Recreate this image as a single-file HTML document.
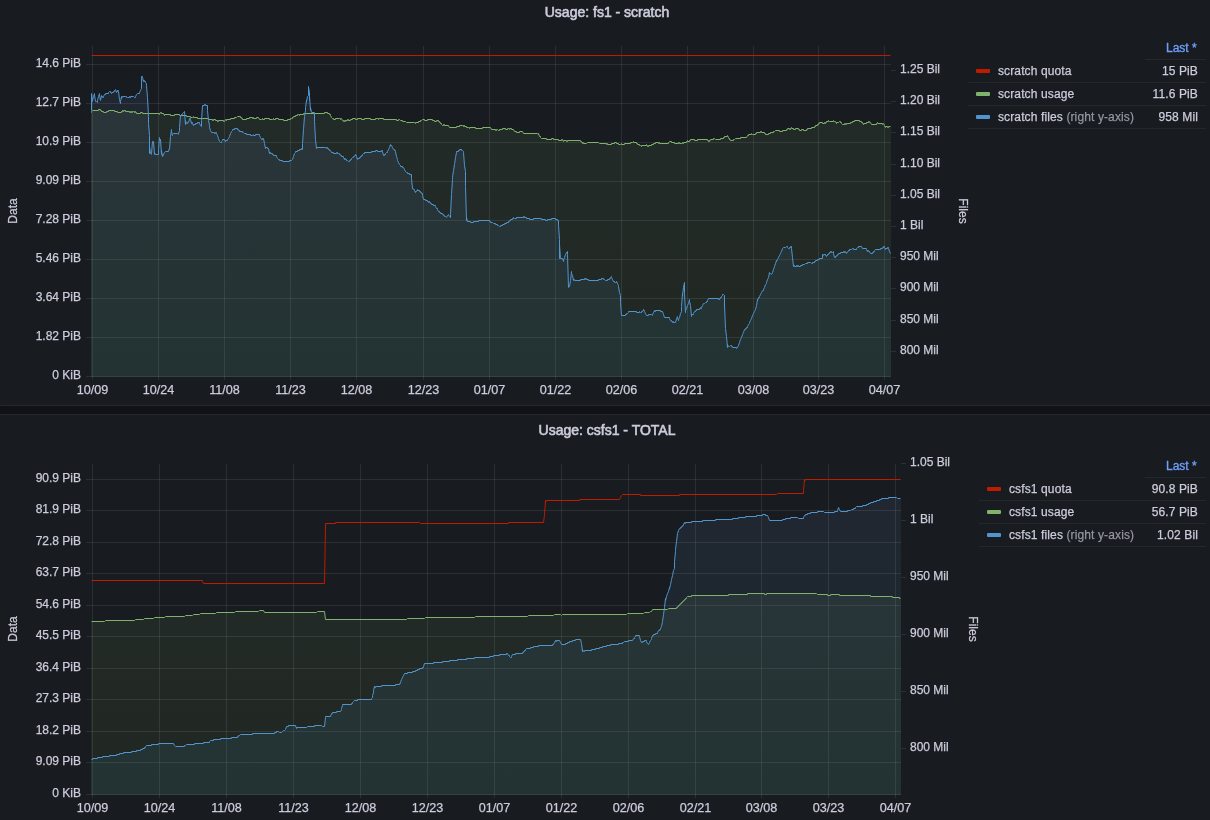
<!DOCTYPE html>
<html><head><meta charset="utf-8"><style>
html,body{margin:0;padding:0;width:1210px;height:820px;overflow:hidden;background:#111217;font-family:"Liberation Sans",sans-serif;}
.panel{position:absolute;left:-1px;width:1230px;background:#181b1f;border:1px solid #25272c;border-radius:2px;box-sizing:border-box}
svg{position:absolute;left:0;top:0;will-change:transform}
.ax{font-family:"Liberation Sans",sans-serif;font-size:12px;fill:#ccccdc;stroke:#ccccdc;stroke-width:0.25px}
.title{position:absolute;left:1.5px;width:1210px;text-align:center;font-size:14px;font-weight:normal;-webkit-text-stroke:0.6px #ccccdc;will-change:transform;color:#ccccdc;line-height:16px}
.lhead{will-change:transform;position:absolute;right:13px;font-size:12px;color:#6e9fff;line-height:14px;-webkit-text-stroke:0.35px #6e9fff}
.hline{position:absolute;left:1145px;width:61px;height:1px;background:#25272c}
.lrow{will-change:transform;position:absolute;height:22px;border-bottom:1px solid #25272c;font-size:12px;color:#ccccdc;line-height:22px;letter-spacing:0.12px;-webkit-text-stroke:0.25px #ccccdc}
.sw{position:absolute;top:9px;width:14px;height:4px;border-radius:1px}
.ln{position:absolute;top:0;white-space:nowrap}
.lv{position:absolute;right:8px;top:0}
.sec{color:rgba(204,204,220,0.65);-webkit-text-stroke:0.25px rgba(204,204,220,0.5)}
</style></head><body>
<div class="panel" style="top:-10px;height:416px"></div>
<div class="panel" style="top:414px;height:430px"></div>
<div class="title" style="top:4px">Usage: fs1 - scratch</div>
<div class="title" style="top:422px">Usage: csfs1 - TOTAL</div>
<svg width="1210" height="820" viewBox="0 0 1210 820">
<defs><linearGradient id="tpg" gradientUnits="userSpaceOnUse" x1="0" y1="46" x2="0" y2="377"><stop offset="0" stop-color="rgb(142,196,143)" stop-opacity="0.1"/><stop offset="1" stop-color="rgb(118,155,81)" stop-opacity="0.1"/></linearGradient><linearGradient id="tpb" gradientUnits="userSpaceOnUse" x1="0" y1="46" x2="0" y2="377"><stop offset="0" stop-color="rgb(121,149,217)" stop-opacity="0.1"/><stop offset="1" stop-color="rgb(52,157,184)" stop-opacity="0.1"/></linearGradient></defs>
<g shape-rendering="crispEdges">
<path d="M92 46h1v334h-1zM158 46h1v334h-1zM224 46h1v334h-1zM290 46h1v334h-1zM356 46h1v334h-1zM423 46h1v334h-1zM489 46h1v334h-1zM555 46h1v334h-1zM621 46h1v334h-1zM687 46h1v334h-1zM753 46h1v334h-1zM818 46h1v334h-1zM884 46h1v334h-1z" fill="rgba(240,250,255,0.09)"/>
<path d="M86 64H891v1H86zM86 103H891v1H86zM86 142H891v1H86zM86 181H891v1H86zM86 220H891v1H86zM86 259H891v1H86zM86 298H891v1H86zM86 337H891v1H86zM86 376H891v1H86zM891 70h5v1h-5zM891 101h5v1h-5zM891 132h5v1h-5zM891 164h5v1h-5zM891 195h5v1h-5zM891 226h5v1h-5zM891 257h5v1h-5zM891 288h5v1h-5zM891 320h5v1h-5zM891 351h5v1h-5z" fill="rgba(240,250,255,0.09)"/>
<path d="M91 377V112H92V111H93V111H94V111H95V111H96V111H97V111H98V110H99V110H100V111H101V112H102V112H103V113H104V113H105V113H106V112H107V112H108V111H109V111H110V111H111V111H112V111H113V111H114V112H115V112H116V112H117V113H118V113H119V113H120V113H121V112H122V111H123V111H124V111H125V112H126V112H127V112H128V112H129V113H130V112H131V113H132V112H133V112H134V112H135V113H136V114H137V114H138V114H139V114H140V113H141V113H142V114H143V114H144V114H145V114H146V114H147V114H148V114H149V114H150V114H151V114H152V114H153V114H154V114H155V114H156V114H157V114H158V114H159V115H160V113H161V114H162V114H163V114H164V115H165V115H166V115H167V115H168V115H169V115H170V116H171V116H172V116H173V116H174V115H175V115H176V115H177V115H178V115H179V116H180V116H181V116H182V116H183V116H184V116H185V116H186V117H187V117H188V117H189V117H190V118H191V118H192V118H193V118H194V118H195V118H196V118H197V119H198V119H199V119H200V119H201V119H202V119H203V119H204V119H205V119H206V119H207V119H208V120H209V120H210V120H211V120H212V121H213V120H214V120H215V121H216V121H217V122H218V121H219V121H220V121H221V121H222V121H223V122H224V122H225V120H226V120H227V120H228V120H229V120H230V119H231V119H232V119H233V119H234V118H235V118H236V118H237V117H238V117H239V117H240V118H241V119H242V120H243V120H244V120H245V120H246V119H247V119H248V119H249V118H250V118H251V118H252V119H253V119H254V119H255V119H256V118H257V118H258V118H259V120H260V120H261V120H262V120H263V120H264V119H265V119H266V119H267V119H268V119H269V120H270V120H271V120H272V120H273V120H274V120H275V119H276V119H277V119H278V120H279V120H280V120H281V120H282V120H283V121H284V121H285V121H286V121H287V120H288V120H289V120H290V119H291V119H292V119H293V117H294V117H295V116H296V116H297V115H298V115H299V115H300V115H301V115H302V115H303V114H304V114H305V114H306V114H307V114H308V114H309V114H310V114H311V114H312V114H313V114H314V114H315V114H316V114H317V114H318V114H319V114H320V114H321V114H322V114H323V114H324V113H325V113H326V113H327V114H328V114H329V115H330V116H331V118H332V119H333V120H334V120H335V119H336V119H337V119H338V119H339V119H340V119H341V119H342V121H343V122H344V122H345V121H346V121H347V120H348V121H349V121H350V120H351V120H352V119H353V119H354V119H355V120H356V120H357V119H358V119H359V119H360V119H361V120H362V120H363V120H364V119H365V119H366V119H367V119H368V119H369V119H370V120H371V120H372V120H373V120H374V120H375V119H376V119H377V119H378V119H379V119H380V119H381V119H382V119H383V120H384V120H385V120H386V120H387V120H388V120H389V120H390V120H391V120H392V120H393V120H394V120H395V120H396V121H397V121H398V120H399V120H400V121H401V121H402V122H403V122H404V122H405V122H406V123H407V123H408V123H409V123H410V123H411V123H412V123H413V123H414V123H415V123H416V123H417V123H418V122H419V122H420V121H421V121H422V120H423V120H424V121H425V121H426V121H427V120H428V120H429V120H430V120H431V120H432V121H433V121H434V122H435V122H436V121H437V121H438V122H439V123H440V124H441V125H442V126H443V125H444V126H445V126H446V126H447V126H448V126H449V128H450V128H451V128H452V128H453V128H454V128H455V128H456V127H457V127H458V127H459V126H460V126H461V126H462V126H463V126H464V127H465V127H466V128H467V128H468V128H469V128H470V128H471V128H472V128H473V128H474V128H475V129H476V129H477V129H478V129H479V129H480V129H481V129H482V128H483V128H484V128H485V128H486V128H487V128H488V128H489V128H490V128H491V130H492V130H493V130H494V130H495V131H496V130H497V130H498V131H499V130H500V130H501V130H502V129H503V129H504V129H505V130H506V130H507V129H508V129H509V129H510V129H511V130H512V130H513V130H514V132H515V132H516V133H517V133H518V133H519V132H520V132H521V132H522V132H523V134H524V134H525V134H526V134H527V134H528V134H529V134H530V134H531V134H532V134H533V134H534V134H535V134H536V134H537V134H538V134H539V137H540V138H541V139H542V139H543V139H544V139H545V139H546V140H547V140H548V140H549V140H550V140H551V139H552V139H553V140H554V140H555V140H556V140H557V140H558V141H559V141H560V141H561V140H562V141H563V141H564V141H565V141H566V142H567V141H568V141H569V141H570V141H571V141H572V141H573V141H574V141H575V141H576V141H577V141H578V141H579V141H580V142H581V142H582V143H583V144H584V144H585V144H586V144H587V143H588V143H589V143H590V143H591V143H592V143H593V143H594V143H595V143H596V143H597V143H598V143H599V144H600V144H601V144H602V144H603V144H604V144H605V144H606V145H607V145H608V145H609V145H610V145H611V144H612V144H613V144H614V143H615V143H616V144H617V144H618V145H619V145H620V145H621V145H622V145H623V145H624V144H625V144H626V144H627V144H628V144H629V144H630V143H631V143H632V143H633V143H634V143H635V143H636V144H637V145H638V145H639V146H640V146H641V146H642V146H643V146H644V146H645V146H646V145H647V147H648V146H649V146H650V146H651V145H652V145H653V144H654V144H655V143H656V143H657V143H658V144H659V144H660V144H661V144H662V144H663V144H664V144H665V144H666V144H667V144H668V143H669V142H670V142H671V143H672V143H673V143H674V144H675V144H676V144H677V144H678V143H679V144H680V144H681V144H682V144H683V143H684V143H685V143H686V142H687V142H688V142H689V141H690V140H691V140H692V140H693V140H694V141H695V141H696V141H697V140H698V140H699V140H700V140H701V140H702V140H703V140H704V140H705V140H706V140H707V141H708V142H709V142H710V140H711V140H712V140H713V139H714V139H715V140H716V140H717V140H718V140H719V140H720V139H721V139H722V139H723V138H724V137H725V137H726V137H727V136H728V138H729V139H730V141H731V141H732V141H733V140H734V140H735V139H736V139H737V139H738V139H739V139H740V138H741V138H742V138H743V138H744V138H745V138H746V138H747V136H748V135H749V135H750V135H751V134H752V135H753V135H754V135H755V134H756V133H757V133H758V133H759V133H760V132H761V133H762V133H763V133H764V134H765V135H766V135H767V135H768V134H769V134H770V133H771V133H772V133H773V132H774V132H775V131H776V131H777V131H778V131H779V132H780V132H781V132H782V131H783V131H784V131H785V131H786V130H787V129H788V129H789V130H790V129H791V129H792V129H793V130H794V130H795V129H796V129H797V129H798V130H799V131H800V131H801V130H802V130H803V131H804V131H805V131H806V130H807V129H808V129H809V129H810V129H811V128H812V128H813V128H814V127H815V126H816V126H817V125H818V124H819V123H820V123H821V123H822V124H823V124H824V123H825V123H826V122H827V122H828V121H829V122H830V122H831V122H832V122H833V121H834V122H835V122H836V123H837V123H838V123H839V122H840V123H841V124H842V125H843V125H844V124H845V125H846V124H847V124H848V124H849V124H850V123H851V123H852V122H853V122H854V121H855V121H856V121H857V121H858V121H859V122H860V122H861V123H862V124H863V124H864V124H865V124H866V123H867V123H868V122H869V123H870V123H871V125H872V125H873V125H874V125H875V125H876V124H877V124H878V124H879V124H880V124H881V124H882V125H883V124H884V126H885V127H886V127H887V128H888V127H889V127H890V127H891V377Z" fill="url(#tpg)"/>
<path d="M91 377V94H92V101H93V97H94V95H95V102H96V102H97V101H98V97H99V95H100V101H101V97H102V98H103V97H104V95H105V94H106V94H107V94H108V93H109V92H110V93H111V93H112V93H113V92H114V91H115V90H116V92H117V91H118V92H119V100H120V102H121V99H122V97H123V97H124V97H125V97H126V97H127V98H128V98H129V97H130V97H131V97H132V97H133V97H134V98H135V97H136V95H137V94H138V94H139V93H140V91H141V77H142V78H143V81H144V82H145V83H146V86H147V98H148V124H149V147H150V154H151V154H152V142H153V142H154V153H155V155H156V155H157V155H158V150H159V139H160V140H161V151H162V156H163V155H164V153H165V152H166V152H167V152H168V151H169V150H170V137H171V132H172V135H173V134H174V134H175V134H176V134H177V134H178V134H179V128H180V117H181V115H182V114H183V113H184V112H185V121H186V124H187V123H188V123H189V119H190V120H191V123H192V124H193V125H194V125H195V124H196V124H197V123H198V123H199V124H200V126H201V121H202V106H203V106H204V105H205V106H206V106H207V111H208V121H209V128H210V131H211V133H212V133H213V133H214V133H215V134H216V134H217V136H218V139H219V142H220V143H221V142H222V140H223V140H224V141H225V141H226V141H227V140H228V139H229V137H230V134H231V132H232V130H233V130H234V129H235V129H236V129H237V130H238V131H239V132H240V132H241V132H242V133H243V133H244V134H245V134H246V135H247V135H248V135H249V135H250V136H251V136H252V136H253V136H254V136H255V135H256V135H257V135H258V135H259V136H260V138H261V140H262V139H263V139H264V144H265V148H266V148H267V149H268V149H269V153H270V154H271V154H272V155H273V156H274V156H275V156H276V157H277V159H278V160H279V161H280V161H281V161H282V162H283V162H284V162H285V162H286V162H287V162H288V162H289V161H290V161H291V161H292V160H293V157H294V154H295V152H296V152H297V151H298V151H299V150H300V150H301V149H302V144H303V130H304V117H305V108H306V102H307V97H308V88H309V97H310V108H311V113H312V113H313V113H314V122H315V140H316V148H317V148H318V148H319V148H320V148H321V148H322V148H323V148H324V148H325V148H326V148H327V149H328V150H329V151H330V151H331V153H332V153H333V154H334V154H335V154H336V153H337V154H338V154H339V154H340V156H341V157H342V157H343V158H344V159H345V160H346V161H347V161H348V162H349V161H350V160H351V159H352V158H353V157H354V157H355V156H356V157H357V159H358V159H359V158H360V157H361V156H362V155H363V154H364V153H365V153H366V153H367V153H368V153H369V153H370V153H371V152H372V152H373V152H374V152H375V151H376V151H377V152H378V152H379V152H380V152H381V151H382V152H383V156H384V155H385V154H386V153H387V152H388V150H389V148H390V146H391V146H392V148H393V150H394V151H395V152H396V157H397V161H398V163H399V165H400V167H401V167H402V168H403V168H404V170H405V172H406V173H407V174H408V174H409V175H410V175H411V179H412V188H413V190H414V191H415V192H416V192H417V191H418V191H419V192H420V193H421V194H422V196H423V200H424V200H425V201H426V201H427V202H428V202H429V203H430V204H431V205H432V205H433V206H434V206H435V207H436V209H437V210H438V212H439V213H440V214H441V214H442V215H443V216H444V217H445V217H446V218H447V216H448V215H449V217H450V215H451V195H452V178H453V171H454V165H455V158H456V152H457V152H458V151H459V150H460V150H461V151H462V151H463V153H464V166H465V187H466V218H467V222H468V222H469V222H470V223H471V223H472V223H473V222H474V222H475V222H476V222H477V222H478V221H479V221H480V221H481V221H482V221H483V221H484V221H485V221H486V221H487V221H488V221H489V222H490V223H491V223H492V223H493V224H494V224H495V225H496V225H497V226H498V226H499V227H500V226H501V226H502V225H503V225H504V224H505V224H506V223H507V223H508V222H509V221H510V220H511V220H512V219H513V218H514V219H515V219H516V218H517V218H518V218H519V218H520V218H521V218H522V218H523V217H524V218H525V218H526V219H527V219H528V219H529V220H530V220H531V220H532V220H533V219H534V219H535V219H536V219H537V219H538V219H539V219H540V219H541V220H542V220H543V220H544V220H545V221H546V221H547V220H548V220H549V220H550V220H551V219H552V219H553V219H554V219H555V220H556V220H557V221H558V226H559V245H560V259H561V259H562V259H563V261H564V258H565V255H566V253H567V255H568V288H569V287H570V281H571V274H572V276H573V280H574V281H575V281H576V281H577V281H578V281H579V281H580V280H581V280H582V280H583V280H584V279H585V279H586V280H587V280H588V281H589V281H590V281H591V281H592V281H593V281H594V281H595V281H596V281H597V281H598V280H599V280H600V280H601V279H602V279H603V280H604V280H605V281H606V281H607V280H608V280H609V279H610V278H611V278H612V280H613V282H614V283H615V283H616V283H617V284H618V287H619V293H620V303H621V316H622V316H623V316H624V316H625V315H626V314H627V314H628V312H629V312H630V312H631V312H632V312H633V312H634V312H635V312H636V313H637V313H638V313H639V312H640V313H641V312H642V312H643V311H644V312H645V314H646V316H647V316H648V315H649V315H650V315H651V315H652V315H653V313H654V312H655V311H656V311H657V311H658V311H659V311H660V312H661V312H662V312H663V315H664V318H665V318H666V318H667V318H668V318H669V319H670V321H671V322H672V322H673V323H674V323H675V323H676V319H677V318H678V320H679V318H680V314H681V307H682V296H683V288H684V294H685V311H686V309H687V306H688V304H689V302H690V306H691V315H692V315H693V314H694V312H695V311H696V310H697V310H698V310H699V309H700V309H701V308H702V306H703V304H704V304H705V303H706V302H707V301H708V299H709V299H710V299H711V299H712V299H713V299H714V299H715V299H716V299H717V299H718V300H719V299H720V298H721V297H722V295H723V295H724V305H725V329H726V337H727V345H728V347H729V347H730V346H731V347H732V348H733V348H734V348H735V348H736V349H737V348H738V346H739V343H740V340H741V338H742V335H743V333H744V330H745V329H746V328H747V327H748V325H749V323H750V321H751V319H752V316H753V314H754V312H755V310H756V306H757V301H758V298H759V297H760V295H761V293H762V291H763V290H764V288H765V285H766V283H767V280H768V278H769V274H770V274H771V275H772V273H773V270H774V267H775V264H776V262H777V260H778V258H779V256H780V254H781V252H782V249H783V248H784V248H785V248H786V247H787V248H788V249H789V248H790V247H791V249H792V258H793V266H794V267H795V267H796V266H797V267H798V267H799V267H800V266H801V266H802V265H803V265H804V265H805V264H806V264H807V263H808V263H809V263H810V263H811V264H812V263H813V263H814V262H815V261H816V261H817V260H818V260H819V259H820V259H821V259H822V257H823V255H824V255H825V256H826V256H827V255H828V254H829V253H830V252H831V253H832V253H833V254H834V258H835V257H836V256H837V255H838V254H839V254H840V253H841V253H842V253H843V252H844V252H845V253H846V253H847V253H848V251H849V250H850V250H851V250H852V249H853V250H854V250H855V250H856V249H857V248H858V247H859V247H860V247H861V247H862V249H863V249H864V249H865V249H866V250H867V251H868V252H869V252H870V254H871V254H872V253H873V252H874V251H875V250H876V250H877V250H878V250H879V250H880V249H881V249H882V248H883V247H884V248H885V249H886V249H887V248H888V249H889V252H890V254H891V377Z" fill="url(#tpb)"/>
</g>
<path d="M91.5,55.5 L890.5,55.5" fill="none" stroke="#bf1b00" stroke-width="1" stroke-linejoin="round"/>
<path d="M91.5,112.5 L91.5,111.5 L92.5,110.5 L98.5,110.5 L98.5,109.5 L100.5,109.5 L100.5,110.5 L101.5,110.5 L101.5,111.5 L103.5,111.5 L103.5,112.5 L106.5,112.5 L106.5,111.5 L108.5,111.5 L108.5,110.5 L114.5,110.5 L114.5,111.5 L117.5,111.5 L117.5,112.5 L121.5,112.5 L121.5,111.5 L122.5,111.5 L122.5,110.5 L123.5,111.5 L123.5,110.5 L125.5,110.5 L125.5,111.5 L129.5,111.5 L129.5,112.5 L130.5,112.5 L130.5,111.5 L131.5,111.5 L131.5,112.5 L132.5,112.5 L132.5,111.5 L133.5,111.5 L134.5,112.5 L134.5,111.5 L135.5,111.5 L135.5,112.5 L136.5,112.5 L136.5,113.5 L140.5,113.5 L140.5,112.5 L142.5,112.5 L142.5,113.5 L159.5,113.5 L159.5,114.5 L160.5,112.5 L161.5,112.5 L161.5,113.5 L163.5,113.5 L164.5,115.5 L164.5,114.5 L170.5,114.5 L170.5,115.5 L174.5,115.5 L174.5,114.5 L179.5,114.5 L179.5,115.5 L186.5,115.5 L186.5,116.5 L190.5,116.5 L190.5,117.5 L192.5,117.5 L193.5,116.5 L193.5,117.5 L197.5,117.5 L197.5,118.5 L208.5,118.5 L208.5,119.5 L212.5,119.5 L212.5,120.5 L213.5,120.5 L213.5,119.5 L215.5,119.5 L215.5,120.5 L217.5,120.5 L217.5,121.5 L218.5,121.5 L218.5,120.5 L223.5,120.5 L223.5,121.5 L224.5,121.5 L225.5,119.5 L226.5,120.5 L226.5,119.5 L230.5,119.5 L230.5,118.5 L234.5,118.5 L234.5,117.5 L236.5,117.5 L237.5,116.5 L240.5,116.5 L240.5,117.5 L241.5,117.5 L241.5,118.5 L242.5,118.5 L242.5,119.5 L246.5,119.5 L246.5,118.5 L249.5,118.5 L249.5,117.5 L252.5,117.5 L252.5,118.5 L253.5,117.5 L253.5,118.5 L256.5,118.5 L256.5,117.5 L258.5,117.5 L259.5,119.5 L261.5,119.5 L262.5,118.5 L262.5,119.5 L264.5,119.5 L264.5,118.5 L269.5,118.5 L269.5,119.5 L272.5,119.5 L273.5,118.5 L273.5,119.5 L275.5,119.5 L275.5,118.5 L278.5,118.5 L278.5,119.5 L283.5,119.5 L283.5,120.5 L287.5,120.5 L287.5,119.5 L290.5,119.5 L290.5,118.5 L291.5,118.5 L292.5,117.5 L292.5,118.5 L293.5,116.5 L295.5,116.5 L295.5,115.5 L297.5,115.5 L297.5,114.5 L298.5,114.5 L299.5,115.5 L299.5,114.5 L303.5,114.5 L303.5,113.5 L324.5,113.5 L324.5,112.5 L327.5,112.5 L327.5,113.5 L329.5,113.5 L329.5,114.5 L330.5,114.5 L330.5,115.5 L331.5,117.5 L332.5,118.5 L333.5,118.5 L333.5,119.5 L335.5,119.5 L335.5,118.5 L339.5,118.5 L340.5,119.5 L340.5,118.5 L341.5,118.5 L342.5,120.5 L343.5,120.5 L343.5,121.5 L344.5,120.5 L344.5,121.5 L345.5,121.5 L345.5,120.5 L347.5,120.5 L347.5,119.5 L348.5,119.5 L348.5,120.5 L350.5,120.5 L350.5,119.5 L352.5,119.5 L352.5,118.5 L355.5,118.5 L355.5,119.5 L357.5,119.5 L357.5,118.5 L361.5,118.5 L361.5,119.5 L364.5,119.5 L364.5,118.5 L370.5,118.5 L370.5,119.5 L375.5,119.5 L375.5,118.5 L377.5,118.5 L378.5,119.5 L378.5,118.5 L383.5,118.5 L383.5,119.5 L396.5,119.5 L396.5,120.5 L398.5,120.5 L398.5,119.5 L399.5,119.5 L400.5,120.5 L402.5,120.5 L402.5,121.5 L405.5,121.5 L406.5,122.5 L414.5,122.5 L415.5,123.5 L415.5,122.5 L418.5,122.5 L418.5,121.5 L420.5,121.5 L420.5,120.5 L421.5,120.5 L422.5,119.5 L424.5,119.5 L424.5,120.5 L427.5,120.5 L427.5,119.5 L432.5,119.5 L432.5,120.5 L434.5,120.5 L434.5,121.5 L436.5,121.5 L436.5,120.5 L438.5,120.5 L438.5,121.5 L439.5,121.5 L439.5,122.5 L440.5,122.5 L440.5,123.5 L441.5,123.5 L441.5,124.5 L442.5,125.5 L443.5,125.5 L443.5,124.5 L444.5,124.5 L444.5,125.5 L448.5,125.5 L449.5,127.5 L456.5,127.5 L456.5,126.5 L459.5,126.5 L459.5,125.5 L462.5,125.5 L463.5,126.5 L463.5,125.5 L464.5,125.5 L464.5,126.5 L466.5,126.5 L466.5,127.5 L468.5,127.5 L469.5,128.5 L469.5,127.5 L475.5,127.5 L475.5,128.5 L482.5,128.5 L482.5,127.5 L490.5,127.5 L491.5,129.5 L495.5,129.5 L495.5,130.5 L496.5,130.5 L496.5,129.5 L497.5,129.5 L498.5,130.5 L499.5,130.5 L499.5,129.5 L502.5,129.5 L502.5,128.5 L505.5,128.5 L505.5,129.5 L507.5,129.5 L507.5,128.5 L508.5,128.5 L509.5,129.5 L509.5,128.5 L511.5,128.5 L511.5,129.5 L513.5,129.5 L514.5,131.5 L516.5,131.5 L516.5,132.5 L519.5,132.5 L519.5,131.5 L522.5,131.5 L523.5,133.5 L537.5,133.5 L538.5,134.5 L538.5,133.5 L539.5,136.5 L540.5,136.5 L540.5,137.5 L541.5,138.5 L546.5,138.5 L546.5,139.5 L551.5,139.5 L551.5,138.5 L553.5,138.5 L553.5,139.5 L558.5,139.5 L558.5,140.5 L561.5,140.5 L561.5,139.5 L562.5,139.5 L562.5,140.5 L563.5,141.5 L563.5,140.5 L566.5,140.5 L566.5,141.5 L567.5,141.5 L567.5,140.5 L580.5,140.5 L580.5,141.5 L581.5,141.5 L582.5,143.5 L582.5,142.5 L583.5,142.5 L583.5,143.5 L586.5,143.5 L587.5,142.5 L598.5,142.5 L599.5,143.5 L606.5,143.5 L606.5,144.5 L607.5,143.5 L607.5,144.5 L611.5,144.5 L611.5,143.5 L614.5,143.5 L614.5,142.5 L616.5,142.5 L616.5,143.5 L618.5,143.5 L618.5,144.5 L620.5,144.5 L621.5,143.5 L621.5,144.5 L624.5,144.5 L624.5,143.5 L630.5,143.5 L630.5,142.5 L632.5,142.5 L633.5,141.5 L633.5,142.5 L636.5,142.5 L636.5,143.5 L637.5,143.5 L637.5,144.5 L639.5,144.5 L639.5,145.5 L640.5,145.5 L641.5,146.5 L641.5,145.5 L646.5,145.5 L646.5,144.5 L647.5,145.5 L647.5,146.5 L648.5,146.5 L648.5,145.5 L651.5,145.5 L651.5,144.5 L653.5,144.5 L653.5,143.5 L655.5,143.5 L655.5,142.5 L658.5,142.5 L658.5,143.5 L659.5,142.5 L659.5,143.5 L668.5,143.5 L668.5,142.5 L669.5,141.5 L671.5,141.5 L671.5,142.5 L674.5,142.5 L674.5,143.5 L678.5,143.5 L678.5,142.5 L679.5,142.5 L679.5,143.5 L681.5,143.5 L682.5,142.5 L682.5,143.5 L683.5,143.5 L683.5,142.5 L686.5,142.5 L686.5,141.5 L687.5,140.5 L687.5,141.5 L689.5,141.5 L689.5,140.5 L690.5,140.5 L690.5,139.5 L694.5,139.5 L694.5,140.5 L697.5,140.5 L697.5,139.5 L707.5,139.5 L707.5,140.5 L708.5,140.5 L708.5,141.5 L709.5,140.5 L709.5,141.5 L710.5,139.5 L713.5,139.5 L713.5,138.5 L714.5,138.5 L715.5,139.5 L720.5,139.5 L720.5,138.5 L723.5,138.5 L723.5,137.5 L724.5,137.5 L724.5,136.5 L727.5,136.5 L727.5,135.5 L728.5,137.5 L729.5,139.5 L729.5,138.5 L730.5,140.5 L733.5,140.5 L733.5,139.5 L734.5,139.5 L735.5,138.5 L740.5,138.5 L740.5,137.5 L746.5,137.5 L747.5,135.5 L748.5,135.5 L748.5,134.5 L751.5,134.5 L751.5,133.5 L752.5,134.5 L755.5,134.5 L755.5,133.5 L756.5,133.5 L756.5,132.5 L760.5,132.5 L760.5,131.5 L761.5,131.5 L761.5,132.5 L764.5,132.5 L764.5,133.5 L765.5,133.5 L765.5,134.5 L768.5,134.5 L768.5,133.5 L770.5,133.5 L770.5,132.5 L773.5,132.5 L773.5,131.5 L774.5,131.5 L775.5,130.5 L779.5,130.5 L779.5,131.5 L782.5,131.5 L782.5,130.5 L786.5,130.5 L786.5,129.5 L787.5,129.5 L787.5,128.5 L789.5,128.5 L789.5,129.5 L790.5,129.5 L790.5,128.5 L791.5,127.5 L791.5,128.5 L793.5,128.5 L793.5,129.5 L795.5,129.5 L795.5,128.5 L798.5,128.5 L798.5,129.5 L799.5,129.5 L799.5,130.5 L801.5,130.5 L801.5,129.5 L803.5,129.5 L803.5,130.5 L806.5,130.5 L806.5,129.5 L807.5,129.5 L807.5,128.5 L811.5,128.5 L811.5,127.5 L814.5,127.5 L814.5,126.5 L815.5,126.5 L815.5,125.5 L817.5,125.5 L817.5,124.5 L818.5,124.5 L818.5,123.5 L819.5,123.5 L819.5,122.5 L822.5,122.5 L822.5,123.5 L824.5,123.5 L824.5,122.5 L825.5,123.5 L825.5,122.5 L826.5,122.5 L826.5,121.5 L828.5,121.5 L828.5,120.5 L829.5,121.5 L833.5,121.5 L833.5,120.5 L834.5,121.5 L835.5,121.5 L836.5,123.5 L836.5,122.5 L838.5,122.5 L839.5,121.5 L840.5,121.5 L840.5,122.5 L841.5,122.5 L841.5,123.5 L842.5,124.5 L844.5,124.5 L844.5,123.5 L845.5,123.5 L845.5,124.5 L846.5,124.5 L846.5,123.5 L850.5,123.5 L850.5,122.5 L852.5,122.5 L852.5,121.5 L854.5,121.5 L854.5,120.5 L859.5,120.5 L859.5,121.5 L861.5,121.5 L861.5,122.5 L862.5,122.5 L862.5,123.5 L863.5,124.5 L863.5,123.5 L866.5,123.5 L866.5,122.5 L868.5,122.5 L868.5,121.5 L869.5,121.5 L869.5,122.5 L870.5,122.5 L871.5,124.5 L876.5,124.5 L876.5,123.5 L877.5,122.5 L877.5,123.5 L882.5,123.5 L882.5,124.5 L883.5,123.5 L884.5,125.5 L885.5,127.5 L885.5,126.5 L887.5,126.5 L887.5,127.5 L888.5,127.5 L888.5,126.5 L890.5,126.5" fill="none" stroke="#7eb26d" stroke-width="1" stroke-linejoin="round"/>
<path d="M91.5,110.5 L91.5,93.5 L92.5,101.5 L92.5,100.5 L93.5,96.5 L94.5,93.5 L94.5,94.5 L95.5,101.5 L96.5,101.5 L97.5,102.5 L97.5,100.5 L98.5,96.5 L99.5,93.5 L99.5,94.5 L100.5,100.5 L101.5,95.5 L101.5,96.5 L102.5,96.5 L102.5,97.5 L103.5,97.5 L103.5,96.5 L104.5,94.5 L105.5,94.5 L105.5,93.5 L108.5,93.5 L108.5,92.5 L109.5,91.5 L110.5,91.5 L110.5,92.5 L111.5,93.5 L111.5,92.5 L113.5,92.5 L113.5,91.5 L114.5,91.5 L114.5,90.5 L115.5,89.5 L116.5,92.5 L116.5,91.5 L117.5,91.5 L117.5,90.5 L118.5,90.5 L118.5,91.5 L119.5,99.5 L120.5,103.5 L120.5,101.5 L121.5,96.5 L121.5,98.5 L122.5,96.5 L125.5,96.5 L126.5,97.5 L126.5,96.5 L127.5,97.5 L129.5,97.5 L129.5,96.5 L130.5,97.5 L130.5,96.5 L133.5,96.5 L134.5,97.5 L135.5,97.5 L135.5,96.5 L136.5,94.5 L137.5,93.5 L139.5,93.5 L139.5,92.5 L140.5,90.5 L141.5,88.5 L141.5,78.5 L141.5,76.5 L142.5,76.5 L142.5,77.5 L143.5,81.5 L143.5,80.5 L144.5,80.5 L144.5,81.5 L145.5,81.5 L145.5,82.5 L146.5,83.5 L146.5,85.5 L147.5,97.5 L148.5,116.5 L148.5,123.5 L149.5,135.5 L149.5,153.5 L149.5,146.5 L150.5,153.5 L151.5,154.5 L151.5,153.5 L152.5,141.5 L153.5,141.5 L154.5,154.5 L154.5,152.5 L155.5,154.5 L158.5,154.5 L158.5,149.5 L159.5,137.5 L159.5,138.5 L160.5,140.5 L160.5,139.5 L161.5,154.5 L161.5,150.5 L162.5,156.5 L162.5,155.5 L163.5,155.5 L163.5,154.5 L164.5,152.5 L165.5,151.5 L168.5,151.5 L168.5,150.5 L169.5,148.5 L169.5,149.5 L170.5,136.5 L171.5,129.5 L171.5,131.5 L172.5,135.5 L172.5,134.5 L173.5,133.5 L177.5,133.5 L178.5,134.5 L178.5,133.5 L179.5,130.5 L179.5,127.5 L180.5,115.5 L180.5,116.5 L181.5,114.5 L182.5,114.5 L182.5,113.5 L183.5,112.5 L184.5,111.5 L185.5,124.5 L185.5,120.5 L186.5,123.5 L187.5,123.5 L187.5,122.5 L188.5,122.5 L189.5,118.5 L190.5,118.5 L190.5,119.5 L191.5,123.5 L191.5,122.5 L192.5,122.5 L192.5,123.5 L193.5,125.5 L193.5,124.5 L195.5,124.5 L195.5,123.5 L197.5,123.5 L197.5,122.5 L199.5,122.5 L199.5,123.5 L200.5,125.5 L201.5,126.5 L201.5,120.5 L202.5,105.5 L204.5,105.5 L204.5,104.5 L205.5,104.5 L205.5,105.5 L207.5,105.5 L207.5,110.5 L208.5,120.5 L209.5,125.5 L209.5,127.5 L210.5,130.5 L211.5,132.5 L213.5,132.5 L214.5,133.5 L214.5,132.5 L215.5,132.5 L215.5,133.5 L216.5,132.5 L216.5,133.5 L217.5,135.5 L218.5,138.5 L219.5,141.5 L220.5,142.5 L221.5,142.5 L221.5,141.5 L222.5,140.5 L222.5,139.5 L224.5,139.5 L224.5,140.5 L225.5,141.5 L225.5,140.5 L227.5,140.5 L227.5,139.5 L228.5,138.5 L229.5,136.5 L230.5,133.5 L231.5,131.5 L232.5,130.5 L232.5,129.5 L234.5,129.5 L234.5,128.5 L237.5,128.5 L237.5,129.5 L238.5,129.5 L238.5,130.5 L239.5,130.5 L239.5,131.5 L242.5,131.5 L242.5,132.5 L243.5,132.5 L244.5,133.5 L246.5,133.5 L246.5,134.5 L250.5,134.5 L250.5,135.5 L252.5,135.5 L253.5,134.5 L253.5,135.5 L255.5,135.5 L255.5,134.5 L259.5,134.5 L259.5,135.5 L260.5,137.5 L261.5,139.5 L262.5,139.5 L262.5,138.5 L263.5,138.5 L264.5,143.5 L265.5,148.5 L265.5,147.5 L267.5,147.5 L267.5,148.5 L268.5,148.5 L269.5,153.5 L269.5,152.5 L270.5,152.5 L270.5,153.5 L272.5,153.5 L272.5,154.5 L273.5,154.5 L273.5,155.5 L276.5,155.5 L276.5,156.5 L277.5,158.5 L278.5,159.5 L279.5,159.5 L279.5,160.5 L282.5,160.5 L282.5,161.5 L289.5,161.5 L289.5,160.5 L291.5,160.5 L292.5,159.5 L293.5,156.5 L294.5,153.5 L295.5,152.5 L295.5,151.5 L297.5,151.5 L297.5,150.5 L299.5,150.5 L299.5,149.5 L301.5,149.5 L301.5,148.5 L302.5,149.5 L302.5,143.5 L303.5,129.5 L304.5,116.5 L305.5,110.5 L305.5,107.5 L306.5,100.5 L306.5,101.5 L307.5,96.5 L308.5,95.5 L308.5,86.5 L308.5,87.5 L309.5,92.5 L309.5,100.5 L309.5,96.5 L310.5,110.5 L310.5,107.5 L311.5,112.5 L314.5,112.5 L314.5,121.5 L315.5,139.5 L316.5,148.5 L316.5,147.5 L325.5,147.5 L326.5,148.5 L326.5,147.5 L327.5,147.5 L327.5,148.5 L328.5,148.5 L328.5,149.5 L329.5,149.5 L329.5,150.5 L330.5,150.5 L331.5,152.5 L333.5,152.5 L333.5,153.5 L336.5,153.5 L336.5,152.5 L337.5,152.5 L337.5,153.5 L338.5,153.5 L339.5,154.5 L339.5,153.5 L340.5,155.5 L341.5,155.5 L341.5,156.5 L343.5,156.5 L343.5,157.5 L344.5,159.5 L344.5,158.5 L345.5,158.5 L345.5,159.5 L346.5,159.5 L346.5,160.5 L347.5,160.5 L348.5,161.5 L349.5,161.5 L349.5,160.5 L350.5,160.5 L350.5,159.5 L351.5,159.5 L351.5,158.5 L352.5,157.5 L353.5,157.5 L353.5,156.5 L354.5,156.5 L355.5,154.5 L355.5,155.5 L356.5,155.5 L356.5,156.5 L357.5,159.5 L357.5,158.5 L359.5,158.5 L359.5,157.5 L360.5,157.5 L360.5,156.5 L361.5,156.5 L361.5,155.5 L362.5,155.5 L362.5,154.5 L363.5,153.5 L364.5,153.5 L364.5,152.5 L371.5,152.5 L371.5,151.5 L375.5,151.5 L375.5,150.5 L377.5,150.5 L377.5,151.5 L381.5,151.5 L381.5,150.5 L382.5,150.5 L382.5,151.5 L383.5,155.5 L384.5,155.5 L384.5,154.5 L385.5,154.5 L385.5,153.5 L386.5,152.5 L387.5,152.5 L387.5,151.5 L388.5,149.5 L389.5,147.5 L390.5,144.5 L390.5,145.5 L391.5,145.5 L392.5,147.5 L393.5,149.5 L394.5,149.5 L394.5,150.5 L395.5,150.5 L395.5,151.5 L396.5,156.5 L397.5,159.5 L397.5,160.5 L398.5,162.5 L399.5,164.5 L400.5,165.5 L400.5,166.5 L402.5,166.5 L402.5,167.5 L403.5,167.5 L404.5,169.5 L405.5,171.5 L406.5,172.5 L407.5,172.5 L407.5,173.5 L409.5,173.5 L409.5,174.5 L411.5,174.5 L411.5,178.5 L412.5,188.5 L412.5,187.5 L413.5,189.5 L414.5,189.5 L414.5,190.5 L415.5,192.5 L415.5,191.5 L416.5,191.5 L417.5,189.5 L417.5,190.5 L419.5,190.5 L419.5,191.5 L420.5,191.5 L420.5,192.5 L421.5,192.5 L421.5,193.5 L422.5,193.5 L422.5,195.5 L423.5,199.5 L425.5,199.5 L425.5,200.5 L427.5,200.5 L427.5,201.5 L428.5,202.5 L428.5,201.5 L429.5,201.5 L429.5,202.5 L430.5,202.5 L430.5,203.5 L431.5,203.5 L431.5,204.5 L433.5,204.5 L433.5,205.5 L435.5,205.5 L435.5,206.5 L436.5,208.5 L437.5,208.5 L437.5,209.5 L438.5,211.5 L439.5,211.5 L439.5,212.5 L440.5,212.5 L440.5,213.5 L442.5,213.5 L442.5,214.5 L443.5,214.5 L443.5,215.5 L444.5,215.5 L444.5,216.5 L445.5,216.5 L446.5,217.5 L447.5,215.5 L448.5,214.5 L449.5,216.5 L450.5,217.5 L450.5,214.5 L451.5,194.5 L452.5,179.5 L452.5,177.5 L453.5,170.5 L454.5,164.5 L455.5,157.5 L456.5,152.5 L456.5,151.5 L458.5,151.5 L458.5,150.5 L459.5,150.5 L459.5,149.5 L461.5,149.5 L461.5,150.5 L462.5,150.5 L463.5,151.5 L463.5,152.5 L464.5,165.5 L465.5,171.5 L465.5,186.5 L466.5,220.5 L466.5,217.5 L467.5,221.5 L470.5,221.5 L470.5,222.5 L473.5,222.5 L473.5,221.5 L478.5,221.5 L478.5,220.5 L489.5,220.5 L489.5,221.5 L490.5,221.5 L490.5,222.5 L492.5,222.5 L493.5,223.5 L495.5,223.5 L495.5,224.5 L497.5,224.5 L497.5,225.5 L498.5,225.5 L499.5,226.5 L500.5,226.5 L500.5,225.5 L502.5,225.5 L502.5,224.5 L504.5,224.5 L504.5,223.5 L506.5,223.5 L506.5,222.5 L508.5,222.5 L508.5,221.5 L509.5,221.5 L509.5,220.5 L510.5,220.5 L510.5,219.5 L512.5,219.5 L512.5,218.5 L513.5,218.5 L513.5,217.5 L514.5,218.5 L516.5,218.5 L516.5,217.5 L523.5,217.5 L523.5,216.5 L524.5,216.5 L524.5,217.5 L526.5,217.5 L526.5,218.5 L529.5,218.5 L529.5,219.5 L533.5,219.5 L533.5,218.5 L541.5,218.5 L541.5,219.5 L545.5,219.5 L545.5,220.5 L547.5,220.5 L547.5,219.5 L551.5,219.5 L551.5,218.5 L555.5,218.5 L555.5,219.5 L557.5,219.5 L557.5,220.5 L558.5,220.5 L558.5,225.5 L559.5,239.5 L559.5,258.5 L559.5,244.5 L560.5,258.5 L562.5,258.5 L563.5,261.5 L563.5,260.5 L564.5,257.5 L565.5,254.5 L566.5,252.5 L567.5,251.5 L567.5,254.5 L568.5,287.5 L569.5,286.5 L570.5,280.5 L571.5,271.5 L571.5,273.5 L572.5,275.5 L573.5,280.5 L573.5,279.5 L574.5,279.5 L574.5,280.5 L580.5,280.5 L580.5,279.5 L584.5,279.5 L584.5,278.5 L585.5,279.5 L585.5,278.5 L586.5,278.5 L586.5,279.5 L588.5,279.5 L588.5,280.5 L598.5,280.5 L598.5,279.5 L601.5,279.5 L601.5,278.5 L603.5,278.5 L603.5,279.5 L604.5,279.5 L605.5,280.5 L607.5,280.5 L607.5,279.5 L609.5,279.5 L609.5,278.5 L610.5,278.5 L610.5,277.5 L611.5,276.5 L611.5,277.5 L612.5,279.5 L613.5,281.5 L614.5,281.5 L614.5,282.5 L615.5,282.5 L616.5,281.5 L616.5,282.5 L617.5,282.5 L617.5,283.5 L618.5,285.5 L618.5,286.5 L619.5,292.5 L620.5,295.5 L620.5,302.5 L621.5,315.5 L625.5,315.5 L625.5,314.5 L626.5,314.5 L626.5,313.5 L627.5,313.5 L628.5,312.5 L628.5,311.5 L636.5,311.5 L636.5,312.5 L639.5,312.5 L639.5,311.5 L640.5,312.5 L641.5,312.5 L641.5,311.5 L642.5,311.5 L643.5,309.5 L643.5,310.5 L644.5,310.5 L644.5,311.5 L645.5,313.5 L646.5,315.5 L648.5,315.5 L648.5,314.5 L651.5,314.5 L652.5,315.5 L652.5,314.5 L653.5,312.5 L654.5,310.5 L654.5,311.5 L655.5,311.5 L655.5,310.5 L660.5,310.5 L660.5,311.5 L662.5,311.5 L663.5,314.5 L664.5,317.5 L669.5,317.5 L669.5,318.5 L670.5,320.5 L671.5,320.5 L671.5,321.5 L672.5,322.5 L672.5,321.5 L673.5,321.5 L673.5,322.5 L675.5,322.5 L676.5,318.5 L677.5,316.5 L677.5,317.5 L678.5,320.5 L678.5,319.5 L679.5,317.5 L680.5,313.5 L681.5,311.5 L681.5,306.5 L682.5,293.5 L682.5,295.5 L683.5,287.5 L684.5,282.5 L684.5,293.5 L685.5,312.5 L685.5,310.5 L686.5,308.5 L687.5,305.5 L688.5,303.5 L689.5,299.5 L689.5,301.5 L690.5,305.5 L691.5,316.5 L691.5,314.5 L693.5,314.5 L693.5,313.5 L694.5,311.5 L695.5,311.5 L695.5,310.5 L696.5,310.5 L696.5,309.5 L699.5,309.5 L699.5,308.5 L700.5,307.5 L700.5,308.5 L701.5,308.5 L701.5,307.5 L702.5,305.5 L703.5,303.5 L704.5,303.5 L705.5,302.5 L706.5,302.5 L706.5,301.5 L707.5,301.5 L707.5,300.5 L708.5,298.5 L718.5,298.5 L718.5,299.5 L719.5,299.5 L719.5,298.5 L720.5,298.5 L720.5,297.5 L721.5,297.5 L721.5,296.5 L722.5,295.5 L722.5,294.5 L723.5,294.5 L724.5,295.5 L724.5,307.5 L724.5,304.5 L725.5,328.5 L726.5,336.5 L727.5,347.5 L727.5,344.5 L728.5,346.5 L729.5,346.5 L730.5,345.5 L731.5,345.5 L731.5,346.5 L732.5,346.5 L732.5,347.5 L736.5,347.5 L736.5,348.5 L737.5,347.5 L738.5,345.5 L739.5,342.5 L740.5,339.5 L741.5,337.5 L742.5,334.5 L743.5,332.5 L744.5,329.5 L745.5,329.5 L745.5,328.5 L746.5,328.5 L746.5,327.5 L747.5,327.5 L747.5,326.5 L748.5,324.5 L749.5,323.5 L749.5,322.5 L750.5,320.5 L751.5,318.5 L752.5,315.5 L753.5,313.5 L754.5,311.5 L755.5,309.5 L756.5,305.5 L757.5,299.5 L757.5,300.5 L758.5,297.5 L759.5,297.5 L759.5,296.5 L760.5,294.5 L761.5,292.5 L762.5,290.5 L763.5,290.5 L763.5,289.5 L764.5,287.5 L765.5,284.5 L766.5,283.5 L766.5,282.5 L767.5,279.5 L768.5,277.5 L769.5,272.5 L769.5,273.5 L770.5,273.5 L771.5,274.5 L772.5,272.5 L773.5,269.5 L774.5,266.5 L775.5,263.5 L776.5,260.5 L776.5,261.5 L777.5,259.5 L778.5,257.5 L779.5,255.5 L780.5,253.5 L781.5,251.5 L782.5,248.5 L783.5,247.5 L785.5,247.5 L786.5,246.5 L787.5,246.5 L787.5,247.5 L788.5,248.5 L789.5,248.5 L789.5,247.5 L790.5,247.5 L790.5,246.5 L791.5,246.5 L791.5,248.5 L792.5,257.5 L793.5,266.5 L793.5,265.5 L794.5,265.5 L794.5,266.5 L796.5,266.5 L796.5,265.5 L797.5,265.5 L797.5,266.5 L798.5,265.5 L798.5,266.5 L800.5,266.5 L800.5,265.5 L802.5,265.5 L802.5,264.5 L804.5,264.5 L805.5,263.5 L807.5,263.5 L807.5,262.5 L810.5,262.5 L811.5,263.5 L812.5,263.5 L812.5,262.5 L814.5,262.5 L814.5,261.5 L815.5,261.5 L815.5,260.5 L817.5,260.5 L817.5,259.5 L819.5,259.5 L819.5,258.5 L822.5,258.5 L822.5,254.5 L822.5,256.5 L823.5,254.5 L825.5,254.5 L825.5,255.5 L826.5,256.5 L826.5,255.5 L827.5,255.5 L827.5,254.5 L828.5,254.5 L828.5,253.5 L829.5,253.5 L829.5,252.5 L830.5,252.5 L830.5,251.5 L831.5,251.5 L831.5,252.5 L832.5,252.5 L833.5,251.5 L833.5,253.5 L834.5,257.5 L835.5,257.5 L835.5,256.5 L836.5,256.5 L836.5,255.5 L837.5,255.5 L837.5,254.5 L838.5,254.5 L838.5,253.5 L840.5,253.5 L840.5,252.5 L843.5,252.5 L843.5,251.5 L844.5,252.5 L844.5,251.5 L845.5,251.5 L845.5,252.5 L846.5,253.5 L846.5,252.5 L847.5,252.5 L848.5,250.5 L849.5,250.5 L849.5,249.5 L851.5,249.5 L852.5,248.5 L853.5,248.5 L853.5,249.5 L856.5,249.5 L856.5,248.5 L857.5,247.5 L858.5,247.5 L858.5,246.5 L861.5,246.5 L862.5,248.5 L866.5,248.5 L866.5,249.5 L867.5,251.5 L867.5,250.5 L868.5,250.5 L868.5,251.5 L869.5,251.5 L870.5,253.5 L872.5,253.5 L872.5,252.5 L873.5,252.5 L873.5,251.5 L874.5,251.5 L874.5,250.5 L875.5,249.5 L880.5,249.5 L880.5,248.5 L882.5,248.5 L882.5,247.5 L883.5,247.5 L883.5,246.5 L884.5,246.5 L884.5,247.5 L885.5,249.5 L885.5,248.5 L887.5,248.5 L887.5,247.5 L888.5,247.5 L888.5,248.5 L889.5,251.5 L890.5,253.5" fill="none" stroke="#5195ce" stroke-width="1" stroke-linejoin="round"/>
<text x="81" y="67" text-anchor="end" class="ax">14.6 PiB</text>
<text x="81" y="106" text-anchor="end" class="ax">12.7 PiB</text>
<text x="81" y="145" text-anchor="end" class="ax">10.9 PiB</text>
<text x="81" y="184" text-anchor="end" class="ax">9.09 PiB</text>
<text x="81" y="223" text-anchor="end" class="ax">7.28 PiB</text>
<text x="81" y="262" text-anchor="end" class="ax">5.46 PiB</text>
<text x="81" y="301" text-anchor="end" class="ax">3.64 PiB</text>
<text x="81" y="340" text-anchor="end" class="ax">1.82 PiB</text>
<text x="81" y="379" text-anchor="end" class="ax">0 KiB</text>
<text x="900" y="73" class="ax">1.25 Bil</text>
<text x="900" y="104" class="ax">1.20 Bil</text>
<text x="900" y="135" class="ax">1.15 Bil</text>
<text x="900" y="167" class="ax">1.10 Bil</text>
<text x="900" y="198" class="ax">1.05 Bil</text>
<text x="900" y="229" class="ax">1 Bil</text>
<text x="900" y="260" class="ax">950 Mil</text>
<text x="900" y="291" class="ax">900 Mil</text>
<text x="900" y="323" class="ax">850 Mil</text>
<text x="900" y="354" class="ax">800 Mil</text>
<text x="92.5" y="394" text-anchor="middle" class="ax" style="font-size:12.6px">10/09</text>
<text x="158.5" y="394" text-anchor="middle" class="ax" style="font-size:12.6px">10/24</text>
<text x="224.5" y="394" text-anchor="middle" class="ax" style="font-size:12.6px">11/08</text>
<text x="290.5" y="394" text-anchor="middle" class="ax" style="font-size:12.6px">11/23</text>
<text x="356.5" y="394" text-anchor="middle" class="ax" style="font-size:12.6px">12/08</text>
<text x="423.5" y="394" text-anchor="middle" class="ax" style="font-size:12.6px">12/23</text>
<text x="489.5" y="394" text-anchor="middle" class="ax" style="font-size:12.6px">01/07</text>
<text x="555.5" y="394" text-anchor="middle" class="ax" style="font-size:12.6px">01/22</text>
<text x="621.5" y="394" text-anchor="middle" class="ax" style="font-size:12.6px">02/06</text>
<text x="687.5" y="394" text-anchor="middle" class="ax" style="font-size:12.6px">02/21</text>
<text x="753.5" y="394" text-anchor="middle" class="ax" style="font-size:12.6px">03/08</text>
<text x="818.5" y="394" text-anchor="middle" class="ax" style="font-size:12.6px">03/23</text>
<text x="884.5" y="394" text-anchor="middle" class="ax" style="font-size:12.6px">04/07</text>
<text transform="translate(17,211) rotate(-90)" text-anchor="middle" class="ax">Data</text>
<text transform="translate(959,211) rotate(90)" text-anchor="middle" class="ax">Files</text>
<defs><linearGradient id="btg" gradientUnits="userSpaceOnUse" x1="0" y1="464" x2="0" y2="795"><stop offset="0" stop-color="rgb(142,196,143)" stop-opacity="0.1"/><stop offset="1" stop-color="rgb(118,155,81)" stop-opacity="0.1"/></linearGradient><linearGradient id="btb" gradientUnits="userSpaceOnUse" x1="0" y1="464" x2="0" y2="795"><stop offset="0" stop-color="rgb(121,149,217)" stop-opacity="0.1"/><stop offset="1" stop-color="rgb(52,157,184)" stop-opacity="0.1"/></linearGradient></defs>
<g shape-rendering="crispEdges">
<path d="M92 464h1v334h-1zM159 464h1v334h-1zM226 464h1v334h-1zM293 464h1v334h-1zM360 464h1v334h-1zM427 464h1v334h-1zM494 464h1v334h-1zM561 464h1v334h-1zM628 464h1v334h-1zM695 464h1v334h-1zM761 464h1v334h-1zM828 464h1v334h-1zM895 464h1v334h-1z" fill="rgba(240,250,255,0.09)"/>
<path d="M86 479H901v1H86zM86 510H901v1H86zM86 542H901v1H86zM86 573H901v1H86zM86 605H901v1H86zM86 636H901v1H86zM86 668H901v1H86zM86 699H901v1H86zM86 731H901v1H86zM86 762H901v1H86zM86 794H901v1H86zM901 463h5v1h-5zM901 520h5v1h-5zM901 577h5v1h-5zM901 634h5v1h-5zM901 691h5v1h-5zM901 748h5v1h-5z" fill="rgba(240,250,255,0.09)"/>
<path d="M91 795V622H92V622H93V622H94V622H95V622H96V622H97V622H98V622H99V622H100V622H101V622H102V622H103V622H104V622H105V621H106V621H107V621H108V621H109V621H110V621H111V621H112V621H113V621H114V621H115V621H116V621H117V621H118V621H119V621H120V621H121V621H122V621H123V621H124V621H125V621H126V621H127V621H128V621H129V621H130V621H131V621H132V621H133V621H134V621H135V620H136V620H137V620H138V620H139V620H140V620H141V620H142V620H143V620H144V619H145V619H146V619H147V619H148V619H149V619H150V619H151V619H152V619H153V619H154V618H155V618H156V618H157V618H158V618H159V618H160V618H161V618H162V618H163V618H164V618H165V617H166V617H167V617H168V617H169V617H170V617H171V617H172V617H173V617H174V617H175V617H176V617H177V617H178V617H179V617H180V617H181V617H182V617H183V617H184V617H185V616H186V616H187V616H188V616H189V616H190V616H191V616H192V616H193V615H194V615H195V615H196V615H197V615H198V615H199V615H200V614H201V614H202V614H203V614H204V614H205V614H206V614H207V614H208V614H209V614H210V614H211V614H212V614H213V614H214V614H215V614H216V613H217V613H218V613H219V613H220V613H221V613H222V613H223V613H224V613H225V613H226V613H227V613H228V613H229V613H230V613H231V613H232V613H233V613H234V613H235V612H236V612H237V612H238V612H239V612H240V612H241V612H242V612H243V612H244V612H245V612H246V612H247V612H248V612H249V612H250V612H251V612H252V612H253V612H254V612H255V612H256V612H257V612H258V612H259V611H260V611H261V611H262V611H263V611H264V613H265V613H266V613H267V613H268V613H269V613H270V613H271V613H272V613H273V613H274V613H275V613H276V613H277V613H278V613H279V613H280V613H281V613H282V613H283V613H284V613H285V613H286V613H287V613H288V613H289V613H290V613H291V613H292V613H293V613H294V613H295V613H296V613H297V613H298V613H299V613H300V613H301V613H302V613H303V613H304V613H305V613H306V613H307V613H308V613H309V613H310V613H311V613H312V613H313V613H314V613H315V613H316V613H317V612H318V612H319V612H320V612H321V612H322V612H323V612H324V612H325V620H326V620H327V620H328V620H329V620H330V620H331V620H332V620H333V620H334V620H335V620H336V620H337V620H338V620H339V620H340V620H341V620H342V620H343V620H344V620H345V620H346V620H347V620H348V620H349V620H350V620H351V620H352V620H353V620H354V620H355V620H356V620H357V620H358V620H359V620H360V620H361V620H362V620H363V620H364V620H365V620H366V620H367V620H368V620H369V620H370V620H371V620H372V620H373V620H374V620H375V620H376V620H377V620H378V620H379V620H380V620H381V620H382V620H383V620H384V620H385V620H386V620H387V620H388V620H389V620H390V620H391V620H392V620H393V620H394V620H395V620H396V620H397V620H398V620H399V620H400V620H401V620H402V620H403V620H404V620H405V620H406V620H407V619H408V619H409V619H410V619H411V619H412V619H413V619H414V619H415V619H416V619H417V619H418V619H419V619H420V619H421V619H422V619H423V619H424V619H425V618H426V618H427V618H428V618H429V618H430V618H431V618H432V618H433V618H434V618H435V618H436V618H437V618H438V618H439V618H440V618H441V618H442V618H443V618H444V618H445V618H446V618H447V618H448V618H449V618H450V618H451V618H452V618H453V618H454V618H455V618H456V618H457V618H458V618H459V618H460V618H461V618H462V618H463V618H464V618H465V618H466V618H467V618H468V618H469V618H470V618H471V618H472V618H473V618H474V618H475V617H476V617H477V617H478V617H479V617H480V617H481V617H482V617H483V617H484V617H485V617H486V617H487V617H488V617H489V617H490V617H491V617H492V617H493V617H494V617H495V617H496V617H497V617H498V617H499V617H500V617H501V617H502V617H503V617H504V617H505V617H506V617H507V617H508V617H509V617H510V617H511V617H512V617H513V617H514V617H515V617H516V617H517V617H518V617H519V617H520V617H521V617H522V617H523V617H524V617H525V617H526V617H527V617H528V616H529V616H530V616H531V616H532V616H533V616H534V616H535V616H536V616H537V616H538V616H539V616H540V616H541V616H542V616H543V616H544V616H545V616H546V616H547V616H548V616H549V616H550V616H551V616H552V616H553V616H554V615H555V615H556V615H557V615H558V615H559V615H560V615H561V616H562V615H563V615H564V615H565V615H566V615H567V615H568V615H569V615H570V615H571V615H572V615H573V615H574V615H575V615H576V615H577V615H578V615H579V615H580V615H581V615H582V615H583V615H584V615H585V615H586V615H587V615H588V615H589V615H590V615H591V615H592V615H593V615H594V615H595V615H596V615H597V615H598V615H599V615H600V615H601V615H602V615H603V615H604V615H605V615H606V615H607V615H608V615H609V615H610V615H611V615H612V615H613V615H614V615H615V615H616V615H617V615H618V615H619V615H620V615H621V615H622V615H623V615H624V615H625V615H626V615H627V614H628V614H629V614H630V614H631V614H632V614H633V614H634V614H635V614H636V614H637V614H638V614H639V614H640V614H641V614H642V614H643V614H644V613H645V613H646V613H647V613H648V613H649V613H650V612H651V612H652V610H653V610H654V610H655V610H656V610H657V610H658V610H659V610H660V610H661V610H662V610H663V610H664V610H665V610H666V610H667V610H668V609H669V609H670V609H671V609H672V609H673V609H674V609H675V609H676V608H677V607H678V606H679V605H680V604H681V603H682V602H683V601H684V600H685V599H686V598H687V597H688V597H689V597H690V597H691V596H692V596H693V596H694V596H695V596H696V596H697V596H698V596H699V596H700V596H701V596H702V596H703V596H704V596H705V596H706V596H707V596H708V596H709V596H710V596H711V596H712V596H713V596H714V596H715V596H716V596H717V596H718V596H719V596H720V596H721V596H722V596H723V596H724V596H725V596H726V596H727V596H728V595H729V595H730V595H731V595H732V595H733V595H734V595H735V595H736V595H737V595H738V595H739V595H740V595H741V595H742V595H743V595H744V595H745V595H746V595H747V594H748V594H749V594H750V594H751V594H752V594H753V594H754V594H755V594H756V594H757V594H758V594H759V594H760V594H761V594H762V594H763V594H764V595H765V595H766V594H767V594H768V594H769V594H770V594H771V594H772V594H773V594H774V594H775V594H776V594H777V594H778V594H779V594H780V594H781V594H782V594H783V594H784V594H785V594H786V594H787V594H788V594H789V594H790V594H791V594H792V594H793V594H794V594H795V594H796V594H797V594H798V594H799V594H800V594H801V594H802V594H803V594H804V594H805V594H806V594H807V594H808V594H809V594H810V594H811V594H812V594H813V594H814V594H815V594H816V594H817V595H818V595H819V595H820V595H821V595H822V595H823V595H824V595H825V595H826V595H827V596H828V596H829V596H830V595H831V595H832V595H833V595H834V595H835V595H836V595H837V595H838V595H839V596H840V596H841V596H842V596H843V596H844V596H845V596H846V596H847V596H848V596H849V596H850V596H851V596H852V596H853V596H854V596H855V596H856V596H857V596H858V596H859V596H860V596H861V596H862V596H863V596H864V596H865V596H866V596H867V596H868V596H869V596H870V597H871V597H872V597H873V597H874V597H875V597H876V597H877V597H878V597H879V597H880V597H881V597H882V597H883V597H884V597H885V597H886V597H887V597H888V597H889V597H890V597H891V597H892V598H893V598H894V598H895V598H896V598H897V598H898V598H899V599H900V599H901V795Z" fill="url(#btg)"/>
<path d="M91 795V760H92V759H93V759H94V759H95V759H96V759H97V758H98V758H99V758H100V758H101V758H102V757H103V757H104V757H105V757H106V757H107V757H108V757H109V756H110V756H111V756H112V756H113V756H114V756H115V756H116V755H117V755H118V755H119V754H120V754H121V754H122V754H123V753H124V753H125V753H126V753H127V753H128V753H129V753H130V753H131V752H132V752H133V752H134V752H135V752H136V751H137V751H138V751H139V751H140V750H141V750H142V749H143V749H144V748H145V747H146V746H147V746H148V746H149V746H150V746H151V745H152V745H153V745H154V745H155V745H156V745H157V745H158V744H159V744H160V744H161V744H162V744H163V744H164V744H165V744H166V744H167V744H168V744H169V744H170V744H171V744H172V744H173V744H174V746H175V747H176V747H177V747H178V747H179V747H180V747H181V747H182V747H183V747H184V746H185V746H186V745H187V745H188V745H189V745H190V745H191V745H192V745H193V745H194V744H195V744H196V744H197V744H198V744H199V744H200V744H201V744H202V744H203V743H204V743H205V743H206V743H207V743H208V743H209V742H210V741H211V741H212V741H213V740H214V740H215V740H216V740H217V740H218V740H219V740H220V739H221V739H222V739H223V739H224V739H225V739H226V739H227V739H228V739H229V739H230V739H231V738H232V738H233V738H234V738H235V738H236V738H237V737H238V736H239V736H240V735H241V735H242V735H243V735H244V735H245V735H246V735H247V735H248V735H249V735H250V735H251V735H252V734H253V734H254V734H255V734H256V734H257V734H258V734H259V734H260V734H261V734H262V734H263V734H264V734H265V734H266V734H267V734H268V734H269V734H270V734H271V734H272V734H273V734H274V733H275V733H276V732H277V732H278V732H279V733H280V733H281V733H282V732H283V731H284V731H285V730H286V727H287V727H288V726H289V726H290V726H291V726H292V726H293V726H294V726H295V726H296V728H297V728H298V728H299V728H300V728H301V728H302V728H303V728H304V728H305V728H306V728H307V727H308V727H309V727H310V727H311V727H312V727H313V727H314V726H315V726H316V726H317V726H318V726H319V726H320V726H321V726H322V727H323V727H324V727H325V717H326V717H327V717H328V717H329V717H330V717H331V714H332V713H333V713H334V713H335V713H336V712H337V712H338V712H339V712H340V712H341V709H342V705H343V705H344V705H345V705H346V705H347V705H348V705H349V705H350V705H351V704H352V703H353V702H354V701H355V701H356V701H357V700H358V700H359V700H360V700H361V700H362V700H363V700H364V700H365V700H366V700H367V700H368V700H369V700H370V700H371V699H372V696H373V691H374V688H375V687H376V687H377V687H378V687H379V687H380V687H381V686H382V686H383V686H384V686H385V686H386V686H387V686H388V686H389V686H390V686H391V686H392V686H393V686H394V686H395V685H396V685H397V685H398V685H399V684H400V683H401V680H402V678H403V676H404V674H405V674H406V674H407V673H408V673H409V673H410V673H411V673H412V672H413V672H414V672H415V671H416V671H417V670H418V670H419V669H420V669H421V669H422V668H423V667H424V664H425V664H426V664H427V664H428V664H429V664H430V664H431V664H432V664H433V663H434V663H435V663H436V663H437V663H438V663H439V663H440V663H441V663H442V662H443V662H444V662H445V662H446V662H447V662H448V662H449V661H450V661H451V661H452V661H453V661H454V661H455V661H456V661H457V660H458V660H459V660H460V660H461V660H462V660H463V660H464V660H465V660H466V659H467V659H468V659H469V659H470V659H471V659H472V659H473V659H474V658H475V658H476V658H477V658H478V658H479V658H480V658H481V658H482V658H483V658H484V658H485V658H486V658H487V658H488V658H489V657H490V657H491V657H492V657H493V656H494V656H495V656H496V656H497V656H498V656H499V655H500V655H501V655H502V655H503V655H504V655H505V655H506V654H507V654H508V656H509V657H510V658H511V657H512V655H513V655H514V655H515V654H516V654H517V654H518V654H519V654H520V654H521V654H522V653H523V652H524V651H525V650H526V649H527V649H528V649H529V649H530V648H531V648H532V648H533V647H534V647H535V647H536V647H537V647H538V646H539V646H540V646H541V646H542V646H543V646H544V646H545V646H546V646H547V646H548V646H549V646H550V646H551V646H552V645H553V645H554V643H555V642H556V641H557V641H558V641H559V641H560V643H561V645H562V645H563V645H564V645H565V644H566V644H567V643H568V643H569V642H570V642H571V642H572V641H573V641H574V641H575V640H576V640H577V640H578V640H579V640H580V640H581V644H582V650H583V652H584V651H585V651H586V651H587V651H588V651H589V651H590V651H591V650H592V650H593V650H594V650H595V649H596V649H597V649H598V649H599V648H600V648H601V648H602V647H603V647H604V647H605V647H606V646H607V646H608V646H609V646H610V645H611V645H612V645H613V645H614V645H615V645H616V645H617V645H618V644H619V644H620V644H621V644H622V643H623V643H624V642H625V642H626V642H627V642H628V641H629V641H630V641H631V641H632V641H633V639H634V638H635V636H636V636H637V636H638V636H639V637H640V641H641V643H642V642H643V642H644V641H645V641H646V642H647V644H648V645H649V643H650V641H651V639H652V636H653V635H654V635H655V634H656V634H657V633H658V631H659V630H660V629H661V627H662V622H663V615H664V608H665V601H666V597H667V594H668V592H669V589H670V585H671V580H672V576H673V571H674V562H675V550H676V542H677V534H678V531H679V529H680V528H681V527H682V526H683V525H684V524H685V523H686V523H687V523H688V523H689V523H690V523H691V522H692V522H693V522H694V522H695V522H696V522H697V522H698V522H699V522H700V522H701V522H702V521H703V521H704V521H705V521H706V521H707V521H708V521H709V521H710V521H711V521H712V521H713V521H714V521H715V520H716V520H717V520H718V520H719V520H720V520H721V520H722V520H723V520H724V520H725V520H726V520H727V520H728V520H729V520H730V520H731V520H732V519H733V519H734V519H735V519H736V519H737V519H738V518H739V518H740V518H741V518H742V518H743V518H744V518H745V517H746V517H747V517H748V517H749V517H750V517H751V517H752V517H753V517H754V517H755V517H756V516H757V516H758V516H759V516H760V516H761V516H762V515H763V515H764V515H765V516H766V516H767V516H768V518H769V521H770V521H771V521H772V521H773V521H774V521H775V521H776V521H777V521H778V521H779V521H780V521H781V521H782V520H783V520H784V520H785V519H786V519H787V519H788V519H789V519H790V518H791V518H792V518H793V518H794V518H795V518H796V518H797V518H798V519H799V519H800V519H801V519H802V519H803V518H804V516H805V515H806V515H807V514H808V514H809V514H810V513H811V513H812V513H813V513H814V513H815V513H816V513H817V512H818V512H819V512H820V512H821V512H822V512H823V512H824V513H825V513H826V513H827V513H828V513H829V513H830V513H831V513H832V513H833V513H834V512H835V512H836V512H837V511H838V508H839V510H840V512H841V512H842V512H843V512H844V512H845V512H846V512H847V511H848V511H849V511H850V511H851V510H852V510H853V509H854V509H855V508H856V507H857V507H858V507H859V507H860V507H861V507H862V506H863V506H864V506H865V506H866V505H867V505H868V504H869V504H870V503H871V503H872V503H873V502H874V502H875V502H876V501H877V501H878V501H879V500H880V500H881V499H882V499H883V499H884V499H885V499H886V499H887V499H888V498H889V498H890V498H891V498H892V498H893V498H894V498H895V498H896V498H897V499H898V499H899V499H900V499H901V795Z" fill="url(#btb)"/>
</g>
<path d="M91.5,580.5 L202.5,580.5 L202.5,581.5 L203.5,583.5 L324.5,583.5 L325.5,523.5 L335.5,523.5 L335.5,522.5 L419.5,522.5 L420.5,523.5 L508.5,523.5 L508.5,522.5 L543.5,522.5 L544.5,514.5 L545.5,500.5 L545.5,502.5 L546.5,500.5 L579.5,500.5 L579.5,499.5 L619.5,499.5 L620.5,497.5 L621.5,495.5 L622.5,494.5 L640.5,494.5 L640.5,495.5 L679.5,495.5 L679.5,494.5 L776.5,494.5 L777.5,493.5 L803.5,493.5 L803.5,490.5 L804.5,479.5 L804.5,481.5 L805.5,479.5 L900.5,479.5" fill="none" stroke="#bf1b00" stroke-width="1" stroke-linejoin="round"/>
<path d="M91.5,621.5 L104.5,621.5 L105.5,620.5 L134.5,620.5 L135.5,619.5 L143.5,619.5 L144.5,618.5 L153.5,618.5 L154.5,617.5 L164.5,617.5 L165.5,616.5 L184.5,616.5 L185.5,615.5 L192.5,615.5 L193.5,614.5 L199.5,614.5 L200.5,613.5 L215.5,613.5 L216.5,612.5 L234.5,612.5 L235.5,611.5 L258.5,611.5 L259.5,610.5 L263.5,610.5 L264.5,612.5 L316.5,612.5 L317.5,611.5 L324.5,611.5 L325.5,619.5 L406.5,619.5 L407.5,618.5 L424.5,618.5 L425.5,617.5 L474.5,617.5 L475.5,616.5 L527.5,616.5 L528.5,615.5 L553.5,615.5 L554.5,614.5 L560.5,614.5 L561.5,615.5 L562.5,614.5 L626.5,614.5 L627.5,613.5 L643.5,613.5 L644.5,612.5 L649.5,612.5 L650.5,611.5 L651.5,611.5 L652.5,609.5 L667.5,609.5 L668.5,608.5 L676.5,608.5 L676.5,607.5 L677.5,607.5 L677.5,606.5 L678.5,606.5 L678.5,605.5 L679.5,605.5 L679.5,604.5 L680.5,604.5 L680.5,603.5 L681.5,603.5 L681.5,602.5 L682.5,602.5 L682.5,601.5 L683.5,601.5 L683.5,600.5 L684.5,600.5 L684.5,599.5 L685.5,599.5 L685.5,598.5 L686.5,598.5 L686.5,597.5 L687.5,596.5 L691.5,596.5 L691.5,595.5 L728.5,595.5 L728.5,594.5 L747.5,594.5 L747.5,593.5 L764.5,593.5 L764.5,594.5 L766.5,594.5 L766.5,593.5 L816.5,593.5 L817.5,594.5 L827.5,594.5 L827.5,595.5 L830.5,595.5 L830.5,594.5 L839.5,594.5 L839.5,595.5 L870.5,595.5 L870.5,596.5 L892.5,596.5 L892.5,597.5 L899.5,597.5 L899.5,598.5 L900.5,598.5" fill="none" stroke="#7eb26d" stroke-width="1" stroke-linejoin="round"/>
<path d="M91.5,759.5 L92.5,759.5 L92.5,758.5 L97.5,758.5 L97.5,757.5 L102.5,757.5 L102.5,756.5 L109.5,756.5 L109.5,755.5 L116.5,755.5 L116.5,754.5 L119.5,754.5 L119.5,753.5 L123.5,753.5 L123.5,752.5 L131.5,752.5 L131.5,751.5 L136.5,751.5 L136.5,750.5 L140.5,750.5 L140.5,749.5 L142.5,749.5 L142.5,748.5 L144.5,748.5 L144.5,747.5 L145.5,747.5 L145.5,746.5 L146.5,745.5 L151.5,745.5 L151.5,744.5 L158.5,744.5 L158.5,743.5 L173.5,743.5 L174.5,745.5 L175.5,746.5 L184.5,746.5 L184.5,745.5 L185.5,745.5 L186.5,744.5 L194.5,744.5 L194.5,743.5 L203.5,743.5 L203.5,742.5 L209.5,742.5 L209.5,741.5 L210.5,740.5 L213.5,740.5 L213.5,739.5 L220.5,739.5 L220.5,738.5 L231.5,738.5 L231.5,737.5 L237.5,737.5 L237.5,736.5 L238.5,736.5 L238.5,735.5 L239.5,735.5 L240.5,734.5 L252.5,734.5 L252.5,733.5 L274.5,733.5 L274.5,732.5 L276.5,732.5 L276.5,731.5 L278.5,731.5 L279.5,732.5 L281.5,732.5 L282.5,731.5 L283.5,730.5 L284.5,730.5 L285.5,729.5 L286.5,726.5 L288.5,726.5 L288.5,725.5 L295.5,725.5 L296.5,728.5 L296.5,727.5 L306.5,727.5 L307.5,726.5 L314.5,726.5 L314.5,725.5 L321.5,725.5 L322.5,726.5 L324.5,726.5 L325.5,717.5 L325.5,716.5 L330.5,716.5 L331.5,713.5 L332.5,713.5 L332.5,712.5 L336.5,712.5 L336.5,711.5 L340.5,711.5 L341.5,709.5 L341.5,708.5 L342.5,705.5 L342.5,704.5 L351.5,704.5 L351.5,703.5 L352.5,703.5 L352.5,702.5 L353.5,701.5 L354.5,700.5 L357.5,700.5 L357.5,699.5 L371.5,699.5 L371.5,698.5 L372.5,697.5 L372.5,695.5 L373.5,692.5 L373.5,690.5 L374.5,686.5 L374.5,687.5 L375.5,687.5 L375.5,686.5 L381.5,686.5 L381.5,685.5 L395.5,685.5 L395.5,684.5 L399.5,684.5 L399.5,683.5 L400.5,683.5 L400.5,682.5 L401.5,679.5 L402.5,677.5 L403.5,675.5 L404.5,673.5 L407.5,673.5 L407.5,672.5 L412.5,672.5 L412.5,671.5 L415.5,671.5 L415.5,670.5 L417.5,670.5 L417.5,669.5 L419.5,669.5 L419.5,668.5 L422.5,668.5 L422.5,667.5 L423.5,667.5 L423.5,666.5 L424.5,663.5 L433.5,663.5 L433.5,662.5 L442.5,662.5 L442.5,661.5 L449.5,661.5 L449.5,660.5 L457.5,660.5 L457.5,659.5 L466.5,659.5 L466.5,658.5 L474.5,658.5 L474.5,657.5 L489.5,657.5 L489.5,656.5 L493.5,656.5 L493.5,655.5 L499.5,655.5 L499.5,654.5 L506.5,654.5 L506.5,653.5 L507.5,653.5 L508.5,655.5 L509.5,655.5 L509.5,656.5 L510.5,657.5 L511.5,657.5 L511.5,656.5 L512.5,654.5 L515.5,654.5 L515.5,653.5 L522.5,653.5 L522.5,652.5 L523.5,652.5 L523.5,651.5 L524.5,651.5 L524.5,650.5 L525.5,650.5 L525.5,649.5 L526.5,648.5 L530.5,648.5 L530.5,647.5 L533.5,647.5 L533.5,646.5 L538.5,646.5 L538.5,645.5 L552.5,645.5 L552.5,644.5 L553.5,644.5 L554.5,642.5 L555.5,640.5 L555.5,641.5 L556.5,641.5 L556.5,640.5 L559.5,640.5 L560.5,642.5 L561.5,644.5 L565.5,644.5 L565.5,643.5 L567.5,643.5 L567.5,642.5 L569.5,642.5 L569.5,641.5 L572.5,641.5 L572.5,640.5 L575.5,640.5 L575.5,639.5 L580.5,639.5 L581.5,643.5 L582.5,651.5 L582.5,649.5 L583.5,651.5 L584.5,651.5 L584.5,650.5 L591.5,650.5 L591.5,649.5 L595.5,649.5 L595.5,648.5 L599.5,648.5 L599.5,647.5 L602.5,647.5 L602.5,646.5 L606.5,646.5 L606.5,645.5 L610.5,645.5 L610.5,644.5 L618.5,644.5 L618.5,643.5 L622.5,643.5 L622.5,642.5 L623.5,642.5 L624.5,641.5 L628.5,641.5 L628.5,640.5 L632.5,640.5 L633.5,638.5 L634.5,638.5 L634.5,637.5 L635.5,636.5 L635.5,635.5 L639.5,635.5 L639.5,636.5 L640.5,640.5 L641.5,642.5 L642.5,642.5 L642.5,641.5 L644.5,641.5 L644.5,640.5 L646.5,640.5 L646.5,641.5 L647.5,643.5 L648.5,644.5 L649.5,642.5 L650.5,640.5 L651.5,639.5 L651.5,638.5 L652.5,635.5 L653.5,635.5 L653.5,634.5 L655.5,634.5 L655.5,633.5 L657.5,633.5 L657.5,632.5 L658.5,630.5 L659.5,630.5 L659.5,629.5 L660.5,629.5 L660.5,628.5 L661.5,626.5 L662.5,621.5 L663.5,614.5 L664.5,607.5 L665.5,598.5 L665.5,600.5 L666.5,596.5 L667.5,593.5 L668.5,591.5 L669.5,587.5 L669.5,588.5 L670.5,584.5 L671.5,579.5 L672.5,575.5 L673.5,570.5 L674.5,568.5 L674.5,561.5 L675.5,551.5 L675.5,549.5 L676.5,541.5 L677.5,533.5 L678.5,530.5 L679.5,528.5 L680.5,528.5 L680.5,527.5 L681.5,527.5 L681.5,526.5 L682.5,526.5 L682.5,525.5 L683.5,525.5 L683.5,524.5 L684.5,522.5 L684.5,523.5 L685.5,523.5 L685.5,522.5 L691.5,522.5 L691.5,521.5 L702.5,521.5 L702.5,520.5 L715.5,520.5 L715.5,519.5 L732.5,519.5 L732.5,518.5 L738.5,518.5 L738.5,517.5 L745.5,517.5 L745.5,516.5 L756.5,516.5 L756.5,515.5 L762.5,515.5 L762.5,514.5 L765.5,514.5 L765.5,515.5 L767.5,515.5 L768.5,517.5 L769.5,520.5 L782.5,520.5 L782.5,519.5 L785.5,519.5 L785.5,518.5 L790.5,518.5 L790.5,517.5 L797.5,517.5 L798.5,518.5 L803.5,518.5 L803.5,517.5 L804.5,515.5 L805.5,515.5 L805.5,514.5 L807.5,514.5 L807.5,513.5 L810.5,513.5 L810.5,512.5 L817.5,512.5 L817.5,511.5 L823.5,511.5 L824.5,512.5 L834.5,512.5 L834.5,511.5 L837.5,511.5 L837.5,510.5 L838.5,507.5 L839.5,509.5 L840.5,511.5 L847.5,511.5 L847.5,510.5 L850.5,510.5 L851.5,509.5 L853.5,509.5 L853.5,508.5 L855.5,508.5 L855.5,507.5 L856.5,506.5 L862.5,506.5 L862.5,505.5 L866.5,505.5 L866.5,504.5 L868.5,504.5 L868.5,503.5 L870.5,503.5 L870.5,502.5 L873.5,502.5 L873.5,501.5 L876.5,501.5 L876.5,500.5 L879.5,500.5 L879.5,499.5 L881.5,499.5 L881.5,498.5 L888.5,498.5 L888.5,497.5 L896.5,497.5 L897.5,498.5 L900.5,498.5" fill="none" stroke="#5195ce" stroke-width="1" stroke-linejoin="round"/>
<text x="81" y="482" text-anchor="end" class="ax">90.9 PiB</text>
<text x="81" y="513" text-anchor="end" class="ax">81.9 PiB</text>
<text x="81" y="545" text-anchor="end" class="ax">72.8 PiB</text>
<text x="81" y="576" text-anchor="end" class="ax">63.7 PiB</text>
<text x="81" y="608" text-anchor="end" class="ax">54.6 PiB</text>
<text x="81" y="639" text-anchor="end" class="ax">45.5 PiB</text>
<text x="81" y="671" text-anchor="end" class="ax">36.4 PiB</text>
<text x="81" y="702" text-anchor="end" class="ax">27.3 PiB</text>
<text x="81" y="734" text-anchor="end" class="ax">18.2 PiB</text>
<text x="81" y="765" text-anchor="end" class="ax">9.09 PiB</text>
<text x="81" y="797" text-anchor="end" class="ax">0 KiB</text>
<text x="910" y="466" class="ax">1.05 Bil</text>
<text x="910" y="523" class="ax">1 Bil</text>
<text x="910" y="580" class="ax">950 Mil</text>
<text x="910" y="637" class="ax">900 Mil</text>
<text x="910" y="694" class="ax">850 Mil</text>
<text x="910" y="751" class="ax">800 Mil</text>
<text x="92.5" y="812" text-anchor="middle" class="ax" style="font-size:12.6px">10/09</text>
<text x="159.5" y="812" text-anchor="middle" class="ax" style="font-size:12.6px">10/24</text>
<text x="226.5" y="812" text-anchor="middle" class="ax" style="font-size:12.6px">11/08</text>
<text x="293.5" y="812" text-anchor="middle" class="ax" style="font-size:12.6px">11/23</text>
<text x="360.5" y="812" text-anchor="middle" class="ax" style="font-size:12.6px">12/08</text>
<text x="427.5" y="812" text-anchor="middle" class="ax" style="font-size:12.6px">12/23</text>
<text x="494.5" y="812" text-anchor="middle" class="ax" style="font-size:12.6px">01/07</text>
<text x="561.5" y="812" text-anchor="middle" class="ax" style="font-size:12.6px">01/22</text>
<text x="628.5" y="812" text-anchor="middle" class="ax" style="font-size:12.6px">02/06</text>
<text x="695.5" y="812" text-anchor="middle" class="ax" style="font-size:12.6px">02/21</text>
<text x="761.5" y="812" text-anchor="middle" class="ax" style="font-size:12.6px">03/08</text>
<text x="828.5" y="812" text-anchor="middle" class="ax" style="font-size:12.6px">03/23</text>
<text x="895.5" y="812" text-anchor="middle" class="ax" style="font-size:12.6px">04/07</text>
<text transform="translate(17,629) rotate(-90)" text-anchor="middle" class="ax">Data</text>
<text transform="translate(969,629) rotate(90)" text-anchor="middle" class="ax">Files</text>
</svg>
<div class="lhead" style="top:41px">Last *</div>
<div class="hline" style="top:59px"></div>
<div class="lrow" style="top:60px;left:968px;width:238px"><span class="sw" style="left:8px;background:#bf1b00"></span><span class="ln" style="left:30px">scratch quota</span><span class="lv">15 PiB</span></div>
<div class="lrow" style="top:83px;left:968px;width:238px"><span class="sw" style="left:8px;background:#7eb26d"></span><span class="ln" style="left:30px">scratch usage</span><span class="lv">11.6 PiB</span></div>
<div class="lrow" style="top:106px;left:968px;width:238px"><span class="sw" style="left:8px;background:#5195ce"></span><span class="ln" style="left:30px">scratch files <span class="sec">(right y-axis)</span></span><span class="lv">958 Mil</span></div>
<div class="lhead" style="top:459px">Last *</div>
<div class="hline" style="top:477px"></div>
<div class="lrow" style="top:478px;left:979px;width:227px"><span class="sw" style="left:8px;background:#bf1b00"></span><span class="ln" style="left:30px">csfs1 quota</span><span class="lv">90.8 PiB</span></div>
<div class="lrow" style="top:501px;left:979px;width:227px"><span class="sw" style="left:8px;background:#7eb26d"></span><span class="ln" style="left:30px">csfs1 usage</span><span class="lv">56.7 PiB</span></div>
<div class="lrow" style="top:524px;left:979px;width:227px"><span class="sw" style="left:8px;background:#5195ce"></span><span class="ln" style="left:30px">csfs1 files <span class="sec">(right y-axis)</span></span><span class="lv">1.02 Bil</span></div>
</body></html>
